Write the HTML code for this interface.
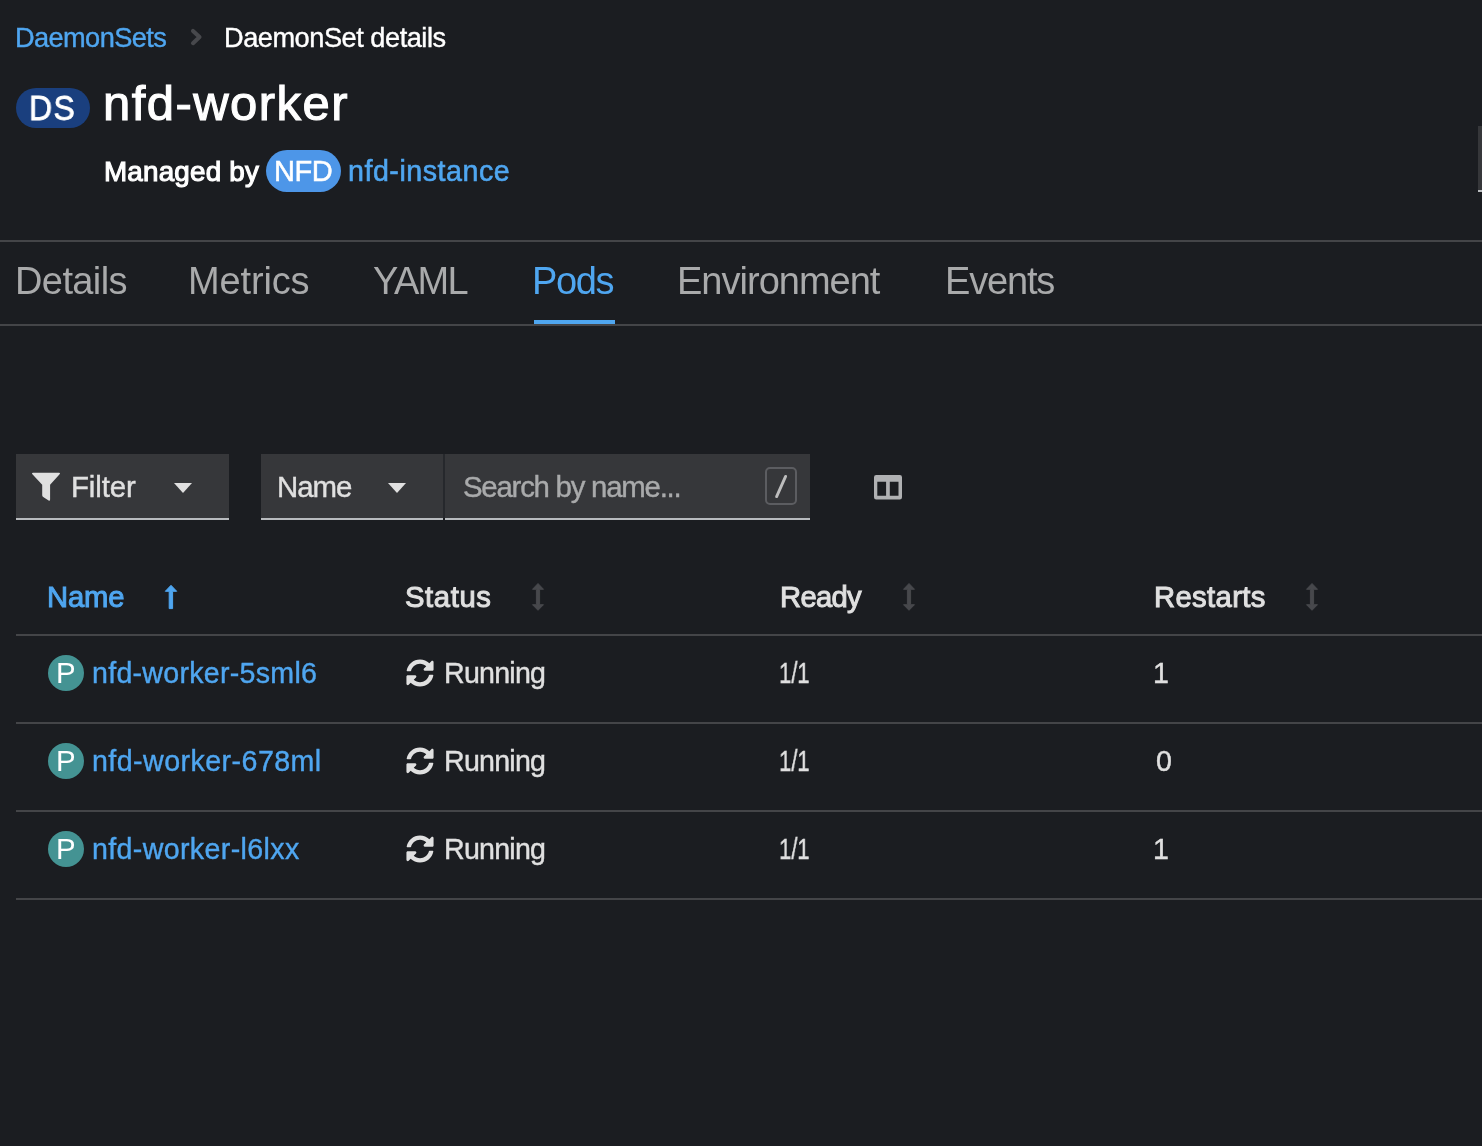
<!DOCTYPE html>
<html><head><meta charset="utf-8">
<style>
html,body{margin:0;padding:0;}
body{width:1482px;height:1146px;background:#1b1d21;position:relative;overflow:hidden;font-family:"Liberation Sans",sans-serif;}
.a{position:absolute;white-space:nowrap;line-height:1;will-change:transform;}
.hl{position:absolute;height:2px;background:#444548;}
</style></head>
<body>
<svg class="a" style="left:189px;top:28px" width="14" height="19" viewBox="0 0 14 19"><path d="M4 3 L10.5 9 L4 15.2" fill="none" stroke="#47484c" stroke-width="4.1" stroke-linecap="round" stroke-linejoin="round"/></svg>
<div class="a" style="left:16px;top:88px;width:74px;height:40px;border-radius:20px;background:#1a3f7e;"></div>
<div class="a" style="left:266px;top:150px;width:75px;height:42px;border-radius:21px;background:#4d96e8;"></div>
<div class="a" style="left:1478px;top:126px;width:4px;height:64px;background:#36373a;border-bottom:2px solid #b8bbbe;"></div>
<div class="hl" style="left:0;top:240px;width:1482px;"></div>
<div class="a" style="left:534px;top:320px;width:81px;height:4px;background:#4fa6f0;"></div>
<div class="hl" style="left:0;top:324px;width:1482px;"></div>
<div class="a" style="left:16px;top:454px;width:213px;height:64px;background:#36373a;border-bottom:2px solid #b8bbbe;"></div>
<div class="a" style="left:261px;top:454px;width:182px;height:64px;background:#36373a;border-bottom:2px solid #b8bbbe;"></div>
<div class="a" style="left:443px;top:454px;width:2px;height:64px;background:#26282c;"></div>
<div class="a" style="left:445px;top:454px;width:365px;height:64px;background:#36373a;border-bottom:2px solid #b8bbbe;"></div>
<svg class="a" style="left:31px;top:472px" width="29" height="29" viewBox="0 0 29 29"><path d="M2 0.8 H28 Q29.6 0.8 28.6 2.2 L19.1 12.8 V27.6 Q19.1 29.3 17.6 28.4 L12.2 25.1 Q11.2 24.4 11.2 23.2 V12.8 L1.4 2.2 Q0.4 0.8 2 0.8 Z" fill="#e0e0e0"/></svg>
<svg class="a" style="left:174px;top:483px" width="18" height="10" viewBox="0 0 18 10"><path d="M0 0 H18 L9 10 Z" fill="#e0e0e0"/></svg>
<svg class="a" style="left:388px;top:483px" width="18" height="10" viewBox="0 0 18 10"><path d="M0 0 H18 L9 10 Z" fill="#e0e0e0"/></svg>
<div class="a" style="left:765px;top:467px;width:28px;height:34px;border:2px solid #5c5d61;border-radius:5px;"></div>
<svg class="a" style="left:774px;top:474px" width="14" height="25" viewBox="0 0 14 25"><path d="M11.6 2.4 L2.6 22.6" stroke="#bdbdbd" stroke-width="2.9" stroke-linecap="round"/></svg>
<svg class="a" style="left:874px;top:475px" width="28" height="25" viewBox="0 0 28 25"><path fill="#b0b1b3" fill-rule="evenodd" d="M2.2 0 H25.8 Q28 0 28 2.2 V22.2 Q28 24.4 25.8 24.4 H2.2 Q0 24.4 0 22.2 V2.2 Q0 0 2.2 0 Z M3.3 6.7 V20.8 H12.1 V6.7 Z M15.8 6.7 V20.8 H24.5 V6.7 Z"/></svg>
<svg class="a" style="left:164px;top:584px" width="14" height="26" viewBox="0 0 14 26"><path d="M7 1.3 L12.7 7.3 H8.6 V24.6 H5.2 V7.3 H1.3 Z" fill="#4fa6f0" stroke="#4fa6f0" stroke-width="1" stroke-linejoin="round"/></svg>
<svg class="a" style="left:531px;top:582px" width="14" height="30" viewBox="0 0 14 30"><path d="M7 1.5 L12.5 7.3 H8.6 V22.7 H12.5 L7 28.3 L1.5 22.7 H5.4 V7.3 H1.5 Z" fill="#47484c" stroke="#47484c" stroke-width="1" stroke-linejoin="round"/></svg>
<svg class="a" style="left:902px;top:582px" width="14" height="30" viewBox="0 0 14 30"><path d="M7 1.5 L12.5 7.3 H8.6 V22.7 H12.5 L7 28.3 L1.5 22.7 H5.4 V7.3 H1.5 Z" fill="#47484c" stroke="#47484c" stroke-width="1" stroke-linejoin="round"/></svg>
<svg class="a" style="left:1305px;top:582px" width="14" height="30" viewBox="0 0 14 30"><path d="M7 1.5 L12.5 7.3 H8.6 V22.7 H12.5 L7 28.3 L1.5 22.7 H5.4 V7.3 H1.5 Z" fill="#47484c" stroke="#47484c" stroke-width="1" stroke-linejoin="round"/></svg>
<div class="hl" style="left:16px;top:634px;width:1466px;"></div>
<div class="a" style="left:48px;top:655px;width:36px;height:36px;border-radius:18px;background:#449393;"></div>
<svg class="a" style="left:406px;top:659px" width="28" height="28" viewBox="0 0 512 512"><path fill="#e0e0e0" d="M370.72 133.28C339.458 104.008 298.888 87.962 255.848 88c-77.458.068-144.328 53.178-162.791 126.85-1.344 5.363-6.122 9.150-11.651 9.150H24.103c-7.498 0-13.194-6.807-11.807-14.176C33.933 94.924 134.813 8 256 8c66.448 0 126.791 26.136 171.315 68.685L463.03 40.970C478.149 25.851 504 36.559 504 57.941V192c0 13.255-10.745 24-24 24H345.941c-21.382 0-32.090-25.851-16.971-40.971l41.750-41.749zM32 296h134.059c21.382 0 32.090 25.851 16.971 40.971l-41.750 41.750c31.262 29.273 71.835 45.319 114.876 45.280 77.418-.070 144.315-53.144 162.787-126.849 1.344-5.363 6.122-9.150 11.651-9.150h57.304c7.498 0 13.194 6.807 11.807 14.176C478.067 417.076 377.187 504 256 504c-66.448 0-126.791-26.136-171.315-68.685L48.970 471.030C33.851 486.149 8 475.441 8 454.059V320c0-13.255 10.745-24 24-24z"/></svg>
<div class="hl" style="left:16px;top:722px;width:1466px;"></div>
<div class="a" style="left:48px;top:743px;width:36px;height:36px;border-radius:18px;background:#449393;"></div>
<svg class="a" style="left:406px;top:747px" width="28" height="28" viewBox="0 0 512 512"><path fill="#e0e0e0" d="M370.72 133.28C339.458 104.008 298.888 87.962 255.848 88c-77.458.068-144.328 53.178-162.791 126.85-1.344 5.363-6.122 9.150-11.651 9.150H24.103c-7.498 0-13.194-6.807-11.807-14.176C33.933 94.924 134.813 8 256 8c66.448 0 126.791 26.136 171.315 68.685L463.03 40.970C478.149 25.851 504 36.559 504 57.941V192c0 13.255-10.745 24-24 24H345.941c-21.382 0-32.090-25.851-16.971-40.971l41.750-41.749zM32 296h134.059c21.382 0 32.090 25.851 16.971 40.971l-41.750 41.750c31.262 29.273 71.835 45.319 114.876 45.280 77.418-.070 144.315-53.144 162.787-126.849 1.344-5.363 6.122-9.150 11.651-9.150h57.304c7.498 0 13.194 6.807 11.807 14.176C478.067 417.076 377.187 504 256 504c-66.448 0-126.791-26.136-171.315-68.685L48.970 471.030C33.851 486.149 8 475.441 8 454.059V320c0-13.255 10.745-24 24-24z"/></svg>
<div class="hl" style="left:16px;top:810px;width:1466px;"></div>
<div class="a" style="left:48px;top:831px;width:36px;height:36px;border-radius:18px;background:#449393;"></div>
<svg class="a" style="left:406px;top:835px" width="28" height="28" viewBox="0 0 512 512"><path fill="#e0e0e0" d="M370.72 133.28C339.458 104.008 298.888 87.962 255.848 88c-77.458.068-144.328 53.178-162.791 126.85-1.344 5.363-6.122 9.150-11.651 9.150H24.103c-7.498 0-13.194-6.807-11.807-14.176C33.933 94.924 134.813 8 256 8c66.448 0 126.791 26.136 171.315 68.685L463.03 40.970C478.149 25.851 504 36.559 504 57.941V192c0 13.255-10.745 24-24 24H345.941c-21.382 0-32.090-25.851-16.971-40.971l41.750-41.749zM32 296h134.059c21.382 0 32.090 25.851 16.971 40.971l-41.750 41.750c31.262 29.273 71.835 45.319 114.876 45.280 77.418-.070 144.315-53.144 162.787-126.849 1.344-5.363 6.122-9.150 11.651-9.150h57.304c7.498 0 13.194 6.807 11.807 14.176C478.067 417.076 377.187 504 256 504c-66.448 0-126.791-26.136-171.315-68.685L48.970 471.030C33.851 486.149 8 475.441 8 454.059V320c0-13.255 10.745-24 24-24z"/></svg>
<div class="hl" style="left:16px;top:898px;width:1466px;"></div>
<div class="a" style="left:14.80px;top:23.80px;font-size:27.20px;letter-spacing:-0.600px;font-weight:400;color:#4fa6f0;-webkit-text-stroke:0.4px #4fa6f0;">DaemonSets</div>
<div class="a" style="left:224.00px;top:24.01px;font-size:27.20px;letter-spacing:-0.478px;font-weight:400;color:#ffffff;-webkit-text-stroke:0.4px #ffffff;">DaemonSet details</div>
<div class="a" style="left:29.20px;top:91.10px;font-size:35.70px;letter-spacing:1.500px;font-weight:400;color:#ffffff;-webkit-text-stroke:0.8px #ffffff;transform-origin:0 0;transform:scaleX(0.8961);">DS</div>
<div class="a" style="left:103.00px;top:78.61px;font-size:49.00px;letter-spacing:1.450px;font-weight:400;color:#ffffff;-webkit-text-stroke:1.1px #ffffff;">nfd-worker</div>
<div class="a" style="left:104.00px;top:157.81px;font-size:27.80px;letter-spacing:0.200px;font-weight:400;color:#ffffff;-webkit-text-stroke:1.1px #ffffff;">Managed by</div>
<div class="a" style="left:273.80px;top:156.91px;font-size:29.00px;letter-spacing:-0.450px;font-weight:400;color:#ffffff;-webkit-text-stroke:0.5px #ffffff;">NFD</div>
<div class="a" style="left:348.20px;top:157.00px;font-size:28.60px;letter-spacing:0.532px;font-weight:400;color:#4fa6f0;-webkit-text-stroke:0.6px #4fa6f0;">nfd-instance</div>
<div class="a" style="left:14.80px;top:262.20px;font-size:38.00px;letter-spacing:-0.600px;font-weight:400;color:#a9aaab;">Details</div>
<div class="a" style="left:188.40px;top:262.20px;font-size:38.00px;letter-spacing:-0.150px;font-weight:400;color:#a9aaab;">Metrics</div>
<div class="a" style="left:373.40px;top:262.20px;font-size:38.00px;letter-spacing:-1.650px;font-weight:400;color:#a9aaab;">YAML</div>
<div class="a" style="left:532.00px;top:262.20px;font-size:38.00px;letter-spacing:-1.350px;font-weight:400;color:#4fa6f0;">Pods</div>
<div class="a" style="left:677.40px;top:262.31px;font-size:38.00px;letter-spacing:-0.990px;font-weight:400;color:#a9aaab;">Environment</div>
<div class="a" style="left:945.00px;top:262.31px;font-size:38.00px;letter-spacing:-1.170px;font-weight:400;color:#a9aaab;">Events</div>
<div class="a" style="left:71.20px;top:472.11px;font-size:29.40px;letter-spacing:-0.090px;font-weight:400;color:#e0e0e0;-webkit-text-stroke:0.4px #e0e0e0;">Filter</div>
<div class="a" style="left:276.60px;top:472.21px;font-size:29.40px;letter-spacing:-1.050px;font-weight:400;color:#e0e0e0;-webkit-text-stroke:0.4px #e0e0e0;">Name</div>
<div class="a" style="left:462.60px;top:472.21px;font-size:29.40px;letter-spacing:-1.238px;font-weight:400;color:#a9aaab;-webkit-text-stroke:0.4px #a9aaab;">Search by name...</div>
<div class="a" style="left:47.20px;top:583.21px;font-size:29.20px;letter-spacing:-0.150px;font-weight:400;color:#4fa6f0;-webkit-text-stroke:1.0px #4fa6f0;">Name</div>
<div class="a" style="left:405.20px;top:583.21px;font-size:29.20px;letter-spacing:0.630px;font-weight:400;color:#e0e0e0;-webkit-text-stroke:1.0px #e0e0e0;">Status</div>
<div class="a" style="left:780.20px;top:583.21px;font-size:29.20px;letter-spacing:-0.675px;font-weight:400;color:#e0e0e0;-webkit-text-stroke:1.0px #e0e0e0;">Ready</div>
<div class="a" style="left:1154.20px;top:583.11px;font-size:29.20px;letter-spacing:0.386px;font-weight:400;color:#e0e0e0;-webkit-text-stroke:1.0px #e0e0e0;">Restarts</div>
<div class="a" style="left:92.20px;top:658.82px;font-size:28.60px;letter-spacing:0.270px;font-weight:400;color:#4fa6f0;-webkit-text-stroke:0.4px #4fa6f0;">nfd-worker-5sml6</div>
<div class="a" style="left:56.40px;top:658.11px;font-size:29.40px;letter-spacing:0.000px;font-weight:400;color:#ffffff;-webkit-text-stroke:0.0px #ffffff;">P</div>
<div class="a" style="left:444.40px;top:658.60px;font-size:28.60px;letter-spacing:-0.750px;font-weight:400;color:#e0e0e0;-webkit-text-stroke:0.4px #e0e0e0;">Running</div>
<div class="a" style="left:779.40px;top:659.00px;font-size:28.60px;letter-spacing:0.000px;font-weight:400;color:#e0e0e0;-webkit-text-stroke:0.4px #e0e0e0;transform-origin:0 0;transform:scaleX(0.7713);">1/1</div>
<div class="a" style="left:1153.40px;top:659.00px;font-size:28.60px;letter-spacing:0.000px;font-weight:400;color:#e0e0e0;-webkit-text-stroke:0.4px #e0e0e0;">1</div>
<div class="a" style="left:92.20px;top:746.82px;font-size:28.60px;letter-spacing:0.450px;font-weight:400;color:#4fa6f0;-webkit-text-stroke:0.4px #4fa6f0;">nfd-worker-678ml</div>
<div class="a" style="left:56.40px;top:746.11px;font-size:29.40px;letter-spacing:0.000px;font-weight:400;color:#ffffff;-webkit-text-stroke:0.0px #ffffff;">P</div>
<div class="a" style="left:444.40px;top:746.60px;font-size:28.60px;letter-spacing:-0.750px;font-weight:400;color:#e0e0e0;-webkit-text-stroke:0.4px #e0e0e0;">Running</div>
<div class="a" style="left:779.40px;top:747.00px;font-size:28.60px;letter-spacing:0.000px;font-weight:400;color:#e0e0e0;-webkit-text-stroke:0.4px #e0e0e0;transform-origin:0 0;transform:scaleX(0.7713);">1/1</div>
<div class="a" style="left:1155.60px;top:747.00px;font-size:28.60px;letter-spacing:0.000px;font-weight:400;color:#e0e0e0;-webkit-text-stroke:0.4px #e0e0e0;">0</div>
<div class="a" style="left:92.20px;top:834.82px;font-size:28.60px;letter-spacing:0.360px;font-weight:400;color:#4fa6f0;-webkit-text-stroke:0.4px #4fa6f0;">nfd-worker-l6lxx</div>
<div class="a" style="left:56.40px;top:834.11px;font-size:29.40px;letter-spacing:0.000px;font-weight:400;color:#ffffff;-webkit-text-stroke:0.0px #ffffff;">P</div>
<div class="a" style="left:444.40px;top:834.60px;font-size:28.60px;letter-spacing:-0.750px;font-weight:400;color:#e0e0e0;-webkit-text-stroke:0.4px #e0e0e0;">Running</div>
<div class="a" style="left:779.40px;top:835.00px;font-size:28.60px;letter-spacing:0.000px;font-weight:400;color:#e0e0e0;-webkit-text-stroke:0.4px #e0e0e0;transform-origin:0 0;transform:scaleX(0.7713);">1/1</div>
<div class="a" style="left:1153.40px;top:835.00px;font-size:28.60px;letter-spacing:0.000px;font-weight:400;color:#e0e0e0;-webkit-text-stroke:0.4px #e0e0e0;">1</div>
</body></html>
